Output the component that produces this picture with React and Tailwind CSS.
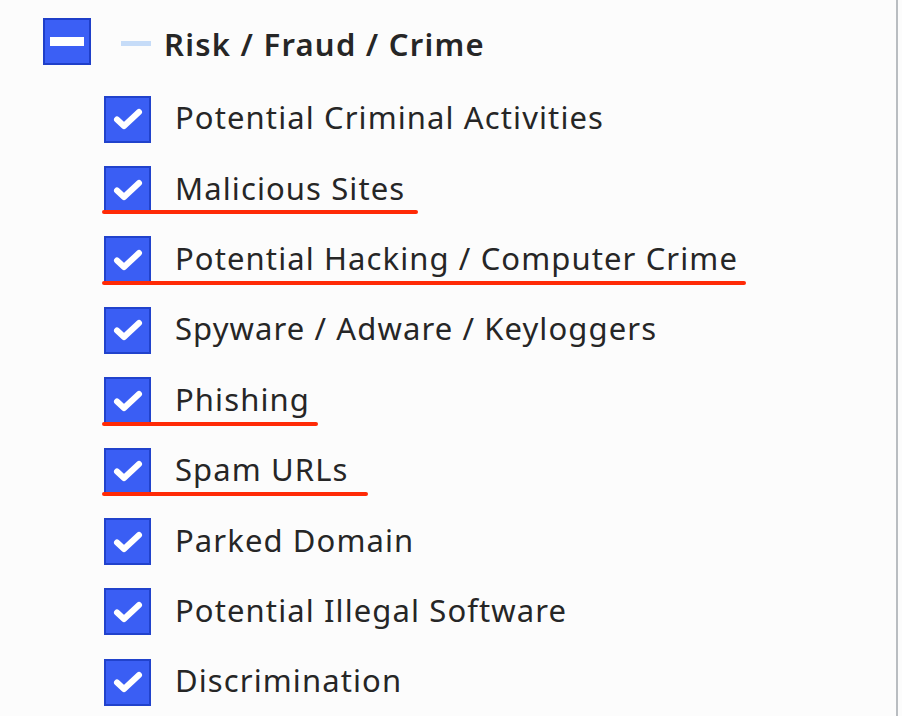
import React from 'react';

const items = [
  { label: 'Potential Criminal Activities' },
  { label: 'Malicious Sites', mark: 316 },
  { label: 'Potential Hacking / Computer Crime', mark: 644 },
  { label: 'Spyware / Adware / Keyloggers' },
  { label: 'Phishing', mark: 216 },
  { label: 'Spam URLs', mark: 266 },
  { label: 'Parked Domain' },
  { label: 'Potential Illegal Software' },
  { label: 'Discrimination' },
];

const CheckBox = () => (
  <div className="w-[47px] h-[47px] shrink-0 bg-[#3a5ef4] border-2 border-[#2142cc] flex items-center justify-center">
    <svg width="34" height="26" viewBox="0 0 34 26" fill="none">
      <path d="M6 13.5 L13 20 L28 6" stroke="#fff" strokeWidth="6" strokeLinecap="round" strokeLinejoin="round" />
    </svg>
  </div>
);

const App = () => {
  return (
    <div
      className="w-[902px] h-[716px] bg-[#fcfcfc] flex overflow-hidden text-[#262626]"
      style={{ fontFamily: '"Noto Sans", "Open Sans", sans-serif' }}
    >
      <div className="flex-1 pl-[43px] pt-[18px]">
        <div className="flex items-center h-[47px]">
          <div className="w-[48px] h-[47px] shrink-0 bg-[#3b5ff5] border-2 border-[#1f3fc9] flex items-center justify-center">
            <div className="w-[34px] h-[9px] bg-white" />
          </div>
          <div className="w-[30px] h-[5px] bg-[#c6dcf8] ml-[30px] mt-[4px]" />
          <span className="ml-[13px] pt-[5px] text-[31px] font-semibold leading-none tracking-[1.25px]">Risk / Fraud / Crime</span>
        </div>
        <div className="flex flex-col pl-[61px] pt-[19px]">
          {items.map((item) => (
            <div key={item.label} className="relative flex items-center h-[70.4px]">
              <CheckBox />
              <span className="ml-[24px] pb-[3px] text-[31px] leading-none tracking-[1.1px]">{item.label}</span>
              {item.mark && (
                <div
                  className="absolute left-[-2px] top-[56px] h-[4px] bg-[#ff2a06] rounded-full"
                  style={{ width: item.mark }}
                />
              )}
            </div>
          ))}
        </div>
      </div>
      <div className="w-[2px] bg-[#b9bdc1] mr-[4px]" />
    </div>
  );
};

export default App;
